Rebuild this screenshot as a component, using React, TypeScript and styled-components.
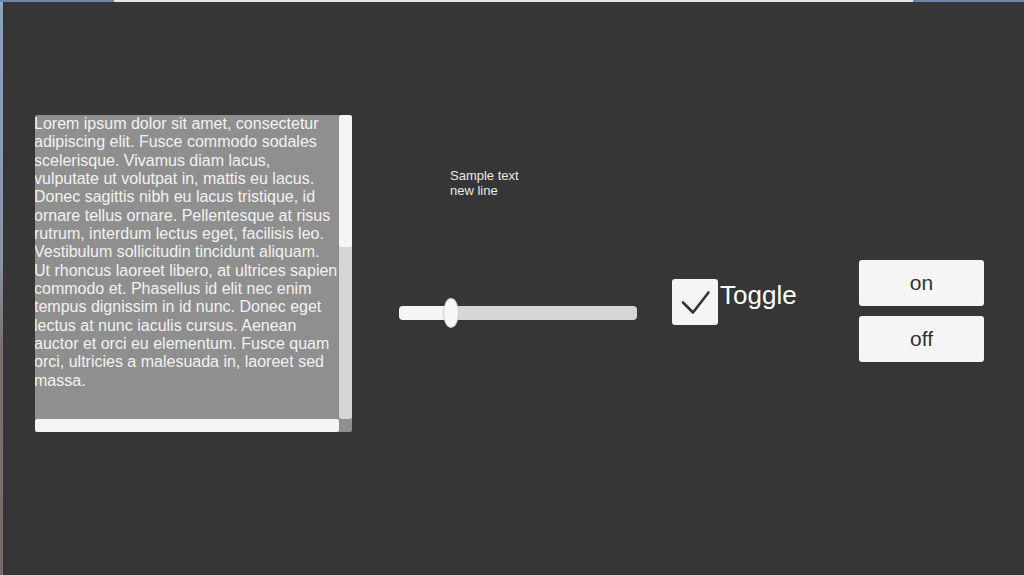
import React from 'react';
import styled, { createGlobalStyle } from 'styled-components';

const GlobalStyle = createGlobalStyle`
  html, body {
    margin: 0;
    padding: 0;
    background: #363636;
  }
  body {
    font-family: "Liberation Sans", Arial, sans-serif;
  }
`;

const Frame = styled.div`
  width: 1024px;
  height: 575px;
  display: flex;
  flex-direction: column;
  overflow: hidden;
`;

const TopStrip = styled.div`
  height: 2px;
  display: flex;
`;

const StripSegment = styled.div<{ $width?: number; $light?: boolean }>`
  flex: ${(p) => (p.$width ? `0 0 ${p.$width}px` : '1')};
  background: ${(p) => (p.$light ? '#e6e6e6' : '#7286aa')};
`;

const Body = styled.div`
  flex: 1;
  display: flex;
`;

const EdgeStrip = styled.div`
  width: 3px;
  background: linear-gradient(to bottom, #8ea3c6 0%, #8a96a8 45%, #7a716c 60%, #756d69 100%);
`;

const Canvas = styled.div`
  flex: 1;
  background: #363636;
  display: flex;
  align-items: flex-start;
  padding: 113px 40px 0 32px;
`;

/* ---- scroll view ---- */

const ScrollView = styled.div`
  width: 317px;
  height: 317px;
  display: grid;
  grid-template-columns: 1fr 13px;
  grid-template-rows: 1fr 13px;
  background: #8f8f8f;
  border-radius: 2px;
`;

const Viewport = styled.div`
  overflow: hidden;
`;

const TextBody = styled.div`
  margin-left: -1px;
  color: #f2f2f2;
  font-size: 16px;
  line-height: 18.35px;
  white-space: nowrap;
`;

const VerticalBar = styled.div`
  display: flex;
  flex-direction: column;
  background: #d6d6d6;
  border-radius: 3px;
`;

const BarHandle = styled.div<{ $size?: number }>`
  flex: ${(p) => (p.$size ? `0 0 ${p.$size}px` : '1')};
  background: #f5f5f5;
  border-radius: 3px;
`;

const HorizontalBar = styled.div`
  display: flex;
  background: #d6d6d6;
  border-radius: 3px;
`;

/* ---- slider column ---- */

const SliderColumn = styled.div`
  width: 238px;
  margin-left: 47px;
  display: flex;
  flex-direction: column;
`;

const SampleText = styled.div`
  margin: 53px 0 0 51px;
  color: #e8e8e8;
  font-size: 13px;
  line-height: 15px;
`;

const Slider = styled.div`
  margin-top: 101px;
  height: 28px;
  position: relative;
  display: flex;
  align-items: center;
`;

const Track = styled.div`
  flex: 1;
  height: 14px;
  border-radius: 4px;
  background: #d6d6d6;
  display: flex;
  overflow: hidden;
`;

const TrackFill = styled.div`
  background: #f5f5f5;
  border-radius: 4px;
`;

const Knob = styled.div`
  position: absolute;
  top: 0;
  width: 14px;
  height: 28px;
  margin-left: -7px;
  border-radius: 50%;
  background: #f7f7f7;
  box-shadow: 0 0 0 1px #c9c9c9;
`;

/* ---- toggle ---- */

const ToggleRow = styled.div`
  margin: 164px 0 0 35px;
  display: flex;
  align-items: flex-start;
  gap: 2px;
`;

const CheckBox = styled.div`
  width: 46px;
  height: 46px;
  border-radius: 3px;
  background: #f5f5f5;
  display: flex;
  align-items: center;
  justify-content: center;
`;

const ToggleLabel = styled.span`
  margin-top: 3px;
  color: #ffffff;
  font-size: 26px;
  line-height: 26px;
`;

/* ---- buttons ---- */

const ButtonStack = styled.div`
  margin: 145px 0 0 auto;
  display: flex;
  flex-direction: column;
  gap: 10px;
`;

const Button = styled.button`
  width: 125px;
  height: 46px;
  border: none;
  border-radius: 3px;
  background: #f5f5f5;
  color: #323232;
  font-family: "Liberation Sans", Arial, sans-serif;
  font-size: 21px;
  padding: 0;
  display: flex;
  align-items: center;
  justify-content: center;
  cursor: pointer;
`;

const loremLines = [
  'Lorem ipsum dolor sit amet, consectetur',
  'adipiscing elit. Fusce commodo sodales',
  'scelerisque. Vivamus diam lacus,',
  'vulputate ut volutpat in, mattis eu lacus.',
  'Donec sagittis nibh eu lacus tristique, id',
  'ornare tellus ornare. Pellentesque at risus',
  'rutrum, interdum lectus eget, facilisis leo.',
  'Vestibulum sollicitudin tincidunt aliquam.',
  'Ut rhoncus laoreet libero, at ultrices sapien',
  'commodo et. Phasellus id elit nec enim',
  'tempus dignissim in id nunc. Donec eget',
  'lectus at nunc iaculis cursus. Aenean',
  'auctor et orci eu elementum. Fusce quam',
  'orci, ultricies a malesuada in, laoreet sed',
  'massa.',
];

const sliderValue = 0.22;

const CheckIcon: React.FC = () => (
  <svg width="46" height="46" viewBox="0 0 46 46">
    <polyline
      points="11,23.5 21,33.5 36.5,13.5"
      fill="none"
      stroke="#333333"
      strokeWidth="2.6"
      strokeLinecap="round"
      strokeLinejoin="round"
    />
  </svg>
);

const App: React.FC = () => {
  return (
    <>
      <GlobalStyle />
      <Frame>
        <TopStrip>
          <StripSegment $width={114} />
          <StripSegment $light />
          <StripSegment $width={111} />
        </TopStrip>
        <Body>
          <EdgeStrip />
          <Canvas>
            <ScrollView>
              <Viewport>
                <TextBody>
                  {loremLines.map((line) => (
                    <div key={line}>{line}</div>
                  ))}
                </TextBody>
              </Viewport>
              <VerticalBar>
                <BarHandle $size={132} />
              </VerticalBar>
              <HorizontalBar>
                <BarHandle />
              </HorizontalBar>
              <div />
            </ScrollView>

            <SliderColumn>
              <SampleText>
                Sample text
                <br />
                new line
              </SampleText>
              <Slider>
                <Track>
                  <TrackFill style={{ width: `${sliderValue * 100}%` }} />
                </Track>
                <Knob style={{ left: `${sliderValue * 100}%` }} />
              </Slider>
            </SliderColumn>

            <ToggleRow>
              <CheckBox>
                <CheckIcon />
              </CheckBox>
              <ToggleLabel>Toggle</ToggleLabel>
            </ToggleRow>

            <ButtonStack>
              <Button>on</Button>
              <Button>off</Button>
            </ButtonStack>
          </Canvas>
        </Body>
      </Frame>
    </>
  );
};

export default App;
